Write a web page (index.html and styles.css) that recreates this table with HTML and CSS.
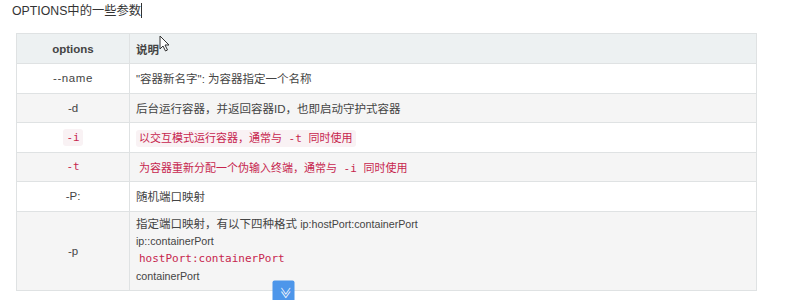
FILE: index.html
```html
<!DOCTYPE html>
<html>
<head>
<meta charset="utf-8">
<link rel="stylesheet" href="styles.css">
</head>
<body>
<div class="page">
  <p class="title">OPTIONS中的一些参数<span class="caret"></span></p>
  <table class="opts">
    <thead>
      <tr><th class="c1">options</th><th class="c2">说明</th></tr>
    </thead>
    <tbody>
      <tr class="r-white"><td class="c1 wide">--name</td><td class="c2">"容器新名字": 为容器指定一个名称</td></tr>
      <tr class="r-gray"><td class="c1">-d</td><td class="c2">后台运行容器，并返回容器ID，也即启动守护式容器</td></tr>
      <tr class="r-white"><td class="c1"><code class="code">-i</code></td><td class="c2"><code class="code">以交互模式运行容器，通常与 -t 同时使用</code></td></tr>
      <tr class="r-gray"><td class="c1"><code class="code nobg">-t</code></td><td class="c2"><code class="code nobg">为容器重新分配一个伪输入终端，通常与 -i 同时使用</code></td></tr>
      <tr class="r-white"><td class="c1">-P:</td><td class="c2">随机端口映射</td></tr>
      <tr class="r-gray tall"><td class="c1">-p</td><td class="c2 multi">
        <div class="ln">指定端口映射，有以下四种格式 <span class="lat">ip:hostPort:containerPort</span></div>
        <div class="ln"><span class="lat">ip::containerPort</span></div>
        <div class="ln codeln"><code class="code nobg">hostPort:containerPort</code></div>
        <div class="ln"><span class="lat">containerPort</span></div>
      </td></tr>
    </tbody>
  </table>
  <svg class="cursor" width="12" height="18" viewBox="0 0 12 18"><path d="M1 1 L1 14 L4 11 L6.5 16 L8.5 15 L6 10 L10 10 Z" fill="#fff" stroke="#333" stroke-width="1"/></svg>
  <div class="fab">≫</div>
</div>
</body>
</html>
```
FILE: styles.css
```css
html, body {
  margin: 0;
  padding: 0;
  background: #fff;
}
.page {
  position: relative;
  width: 786px;
  height: 300px;
  overflow: hidden;
  font-family: "Liberation Sans", "Noto Sans CJK SC", sans-serif;
  color: #333;
}
.title {
  margin: 0;
  padding: 3px 0 0 12px;
  font-size: 12.3px;
  line-height: 16px;
  color: #333;
}
.caret {
  display: inline-block;
  width: 1px;
  height: 15px;
  background: #333;
  vertical-align: -3px;
}
.opts {
  margin: 14px 0 0 16px;
  width: 741px;
  border-collapse: collapse;
  font-size: 11.5px;
  color: #444;
}
.opts th, .opts td {
  border: 1px solid #dfe2e3;
  padding: 0 6px;
  vertical-align: middle;
}
.opts thead tr {
  background: #edf1f2;
  height: 30px;
}
.opts th {
  font-weight: bold;
  color: #444;
}
.opts th.c2 { text-align: left; }
.opts td.c1, .opts th.c1 {
  width: 100px;
  text-align: center;
}
.opts td.wide { letter-spacing: 0.6px; }
.opts .c2 { text-align: left; }
.opts tbody tr { height: 29.5px; }
.r-white { background: #fff; }
.r-gray { background: #f5f5f5; }
.opts tbody tr.tall { height: 79px; }
.multi { padding-top: 5px; padding-bottom: 5px; }
.ln { line-height: 16.5px; }
.codeln { line-height: 18px; }
.lat { font-size: 10.7px; }
.code {
  font-family: "DejaVu Sans Mono", "Noto Sans CJK SC", monospace;
  font-size: 11px;
  color: #c7254e;
  background: #f9f2f4;
  padding: 2px 3px;
  border-radius: 3px;
}
.code.nobg { background: transparent; }
.cursor {
  position: absolute;
  left: 159px;
  top: 35px;
}
.fab {
  position: absolute;
  left: 271px;
  top: 282px;
  width: 25px;
  height: 22px;
  background: #4d96ea;
  border-radius: 2px;
  color: #fff;
  font-size: 12px;
  text-align: center;
  line-height: 20px;
  transform: rotate(90deg);
}
```
